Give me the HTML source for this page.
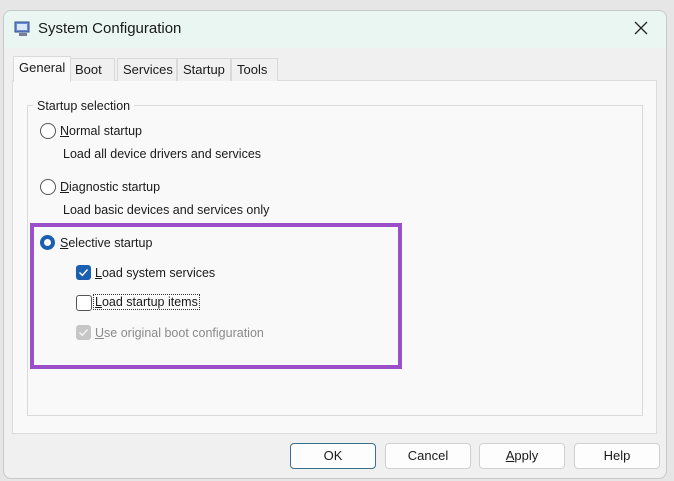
<!DOCTYPE html>
<html><head><style>
body{margin:0;width:674px;height:481px;background:#e6e6e6;font-family:"Liberation Sans",sans-serif;font-size:12.5px;color:#1a1a1a;position:relative;overflow:hidden}
.abs{position:absolute}
.win{left:3px;top:10px;width:662px;height:467px;background:#f0f0f0;border:1px solid #c8c8c8;border-radius:8px;overflow:hidden}
.title{left:0;top:0;width:662px;height:37px;background:#e9f6f2}
.tab{top:47px;height:22px;line-height:22px;font-size:13px;padding:0 5px;background:#f0f0f0;border:1px solid #d9d9d9;border-bottom:none}
.panel{left:8px;top:69px;width:643px;height:352px;background:#f9f9f9;border:1px solid #dcdcdc}
.grp{left:14px;top:24px;width:614px;height:309px;border:1px solid #dadada}
.radio{width:14px;height:14px;border:1px solid #555;border-radius:50%;background:#fff}
.cb{width:14px;height:14px;border:1px solid #555;border-radius:3px;background:#fff}
.btn{top:432px;width:84px;height:24px;border:1px solid #d0d0d0;border-radius:4px;background:#fdfdfd;text-align:center;line-height:24px;font-size:13px}
</style></head><body>
<div class="abs win">
<div class="abs title"></div>
<svg class="abs" style="left:10px;top:10px" width="18" height="16"><rect x="1" y="1" width="14" height="10" fill="#6d8bd0" stroke="#35508f"/><rect x="3" y="3" width="10" height="6" fill="#dbe6ff"/><rect x="5" y="12" width="8" height="3" fill="#7a7a9a"/></svg>
<div class="abs" style="left:34px;top:9px;font-size:15px">System Configuration</div>
<svg class="abs" style="left:630px;top:10px" width="14" height="14"><path d="M1 1L13 13M13 1L1 13" stroke="#222" stroke-width="1.3"/></svg>
<div class="abs panel">
<div class="abs grp"></div>
<div class="abs" style="left:20px;top:18px;background:#f9f9f9;padding:0 4px">Startup selection</div>
<div class="abs radio" style="left:27px;top:42px"></div>
<div class="abs" style="left:47px;top:43px"><u>N</u>ormal startup</div>
<div class="abs" style="left:50px;top:66px">Load all device drivers and services</div>
<div class="abs radio" style="left:27px;top:98px"></div>
<div class="abs" style="left:47px;top:99px"><u>D</u>iagnostic startup</div>
<div class="abs" style="left:50px;top:122px">Load basic devices and services only</div>
<div class="abs" style="left:27px;top:154px;width:15px;height:15px;border-radius:50%;background:#1a5fb0"><div class="abs" style="left:4px;top:4px;width:7px;height:7px;border-radius:50%;background:#fff"></div></div>
<div class="abs" style="left:47px;top:155px"><u>S</u>elective startup</div>
<div class="abs" style="left:63px;top:184px;width:15px;height:15px;border-radius:3px;background:#1a5fb0"><svg width="15" height="15"><path d="M3.5 7.5L6.3 10.3L11.5 4.5" stroke="#fff" stroke-width="1.4" fill="none"/></svg></div>
<div class="abs" style="left:82px;top:185px"><u>L</u>oad system services</div>
<div class="abs cb" style="left:63px;top:214px"></div>
<div class="abs" style="left:81px;top:214px;outline:1px dotted #333;padding:0 1px"><u>L</u>oad startup items</div>
<div class="abs" style="left:63px;top:244px;width:15px;height:15px;border-radius:3px;background:#c6c6c6"><svg width="15" height="15"><path d="M3.5 7.5L6.3 10.3L11.5 4.5" stroke="#f4f4f4" stroke-width="1.4" fill="none"/></svg></div>
<div class="abs" style="left:82px;top:245px;color:#8a8a8a"><u>U</u>se original boot configuration</div>
</div>
<div class="abs tab" style="left:9px;top:45px;height:25px;background:#f9f9f9;z-index:2">General</div>
<div class="abs tab" style="left:65px;width:34px">Boot</div>
<div class="abs tab" style="left:113px;width:48px">Services</div>
<div class="abs tab" style="left:173px;width:42px">Startup</div>
<div class="abs tab" style="left:227px;width:35px">Tools</div>
<div class="abs btn" style="left:286px;border-color:#3b6f8f">OK</div>
<div class="abs btn" style="left:381px">Cancel</div>
<div class="abs btn" style="left:475px"><u>A</u>pply</div>
<div class="abs btn" style="left:570px">Help</div>
</div>
<div class="abs" style="left:30px;top:223px;width:364px;height:138px;border:4px solid #9b4fc9"></div>
</body></html>
